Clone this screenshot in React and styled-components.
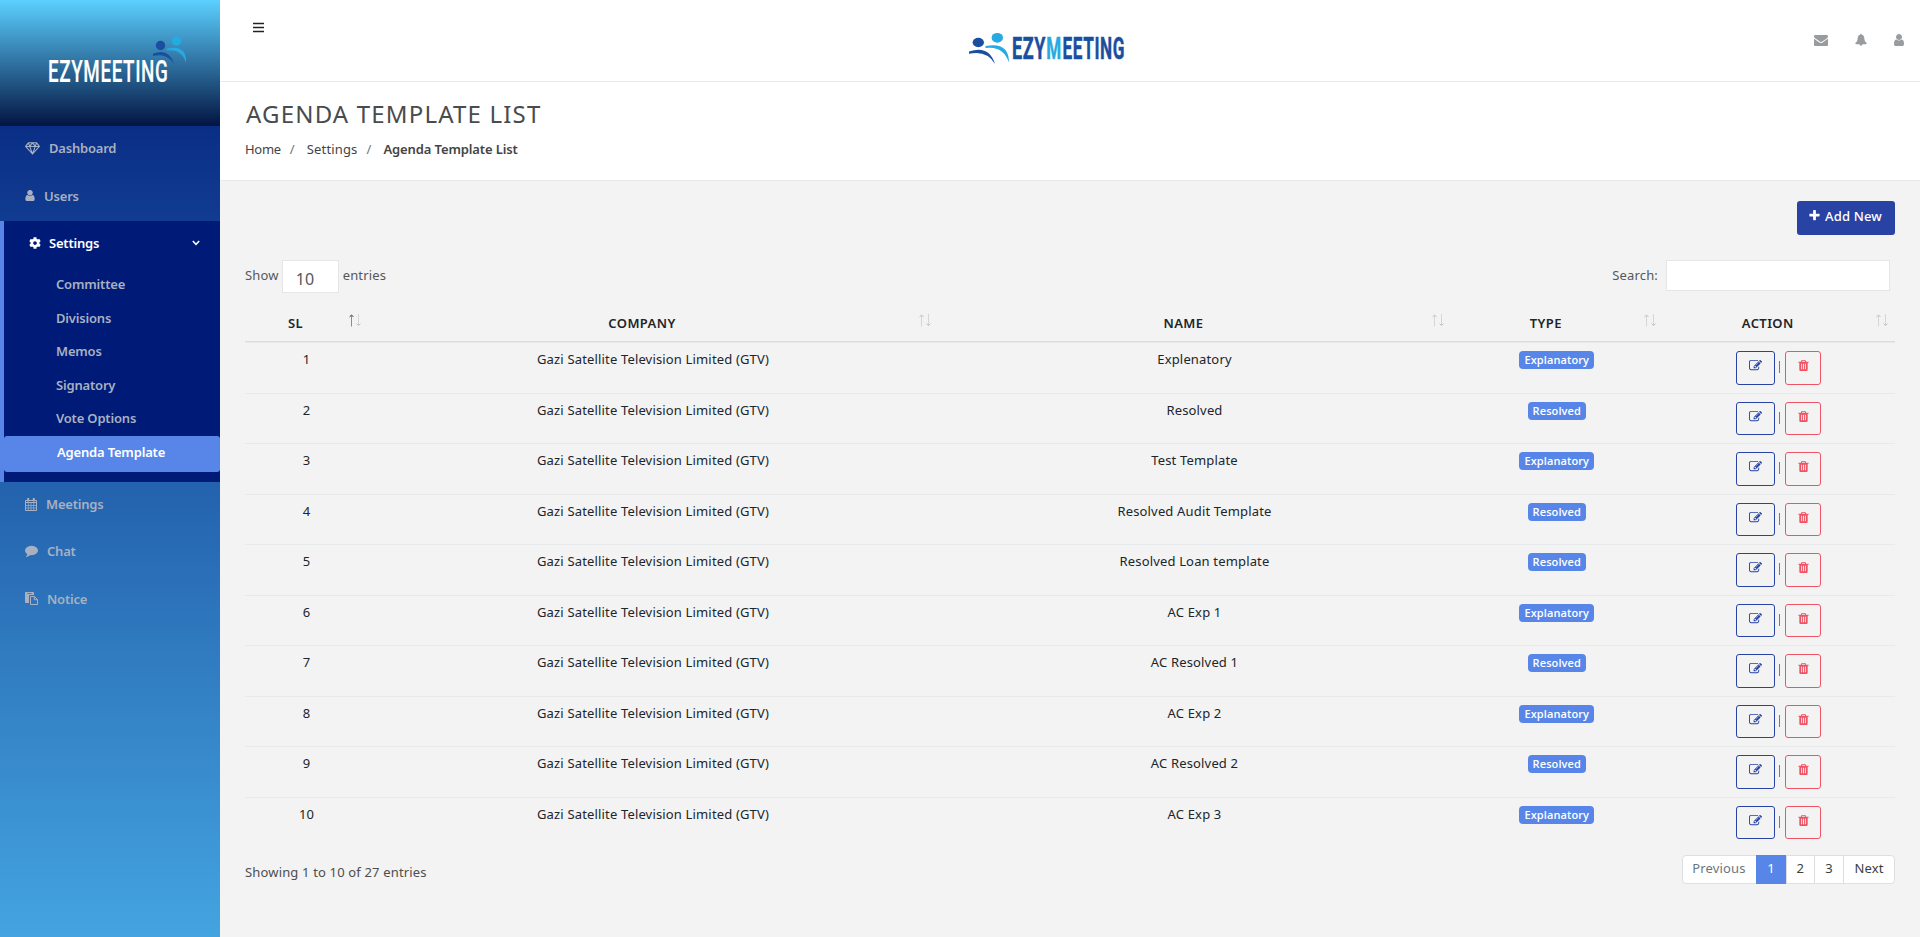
import React from "react";
import styled, { createGlobalStyle, css } from "styled-components";
import { FaCog } from "react-icons/fa";

const Global = createGlobalStyle`
  * { box-sizing: border-box; }
  html, body { margin: 0; }
  body {
    font-family: "Noto Sans", "Open Sans", sans-serif;
    font-size: 13px;
    line-height: 20px;
    letter-spacing: 0.16px;
    color: #676a6c;
    background: #f3f3f4;
  }
`;

const Page = styled.div`
  display: flex;
  height: 937px;
  overflow: hidden;
`;
const Sidebar = styled.nav`
  width: 220px;
  flex: none;
  display: flex;
  flex-direction: column;
  background: linear-gradient(#022c85 0, #0a2e86 126px, #44a4e0 937px);
`;
const Brand = styled.div`
  height: 126px;
  background: linear-gradient(#5bd0ff, #031442);
`;
const NavItem = styled.a`
  display: flex;
  align-items: center;
  height: ${(p) => p.$h || 47}px;
  padding-left: 25px;
  color: ${(p) => (p.$active ? "#fff" : "#a7b1c2")};
  font-weight: 600;
  letter-spacing: -0.2px;
  svg { flex: none; margin-right: ${(p) => p.$gap || 10}px; }
`;
const Group = styled.div`
  height: 261px;
  border-left: 4px solid #5786e8;
  background: #001a78;
`;
const GroupTitle = styled(NavItem)`
  margin-bottom: 3px;
`;
const Chevron = styled.svg`
  && { margin: 0 20px 0 auto; }
`;
const SubItem = styled.a`
  display: block;
  height: 33.6px;
  line-height: 33px;
  padding-left: 52px;
  font-weight: 600;
  letter-spacing: -0.18px;
  color: #a7b1c2;
  ${(p) => p.$active && css`
    height: 36px;
    line-height: 33px;
    padding-left: 53px;
    border-radius: 3px;
    color: #fff;
    background: #5786e8;
  `}
`;

const Main = styled.main`
  flex: 1;
  display: flex;
  flex-direction: column;
`;
const TopBar = styled.header`
  display: grid;
  grid-template-columns: 1fr 208px 1fr;
  height: 82px;
  background: #fff;
  border-bottom: 1px solid #e7eaec;
`;
const MenuIcon = styled.svg`
  margin: 22px 0 0 33px;
`;
const Logo = styled.svg`
  display: block;
  overflow: visible;
`;
const Tools = styled.div`
  display: flex;
  justify-content: flex-end;
  gap: 26px;
  padding: 33px 16px 0 0;
  color: #999c9e;
`;
const Heading = styled.section`
  height: 99px;
  padding: 19px 0 0 25px;
  background: #fff;
  border-bottom: 1px solid #e7eaec;
`;
const Title = styled.h1`
  margin: 0 0 12px 1px;
  font-size: 24px;
  line-height: 26px;
  font-weight: 400;
  letter-spacing: 1.18px;
  color: #4a4b4d;
`;
const Crumbs = styled.div`
  display: flex;
  line-height: 20px;
  color: #444;
`;
const Crumb = styled.span`
  letter-spacing: ${(p) => p.$ls}px;
  font-weight: ${(p) => (p.$current ? 600 : 400)};
`;
const Slash = styled.span`
  width: 26px;
  padding-left: 9px;
  color: #6c757d;
`;
const Content = styled.section`
  flex: 1;
  padding: 20px 25px 0;
`;
const Right = styled.div`
  display: flex;
  justify-content: flex-end;
`;
const AddButton = styled.button`
  display: flex;
  align-items: center;
  gap: 4px;
  width: 98px;
  height: 34px;
  padding: 0 0 5px 11px;
  border: 0;
  border-radius: 3px;
  background: #2843a3;
  color: #fff;
  font: 500 13px "Noto Sans", sans-serif;
  letter-spacing: 0.16px;
`;
const Filters = styled.div`
  display: flex;
  justify-content: space-between;
  margin-top: 25px;
  height: 44px;
  color: #55585a;
`;
const Field = styled.label`
  display: flex;
  line-height: 31px;
`;
const Select = styled.span`
  width: 57px;
  height: 33px;
  margin: 0 4px 0 3px;
  padding-left: 13px;
  border: 1px solid #e5e6e7;
  background: #fff;
  font-size: 16px;
  line-height: 36px;
`;
const Search = styled.input`
  width: 224px;
  height: 31px;
  margin: 0 5px 0 8px;
  border: 1px solid #e5e6e7;
  background: #fff;
`;
const Table = styled.div`
  color: #212529;
`;
const Row = styled.div`
  display: grid;
  grid-template-columns: 123px 570px 513px 211.5px 232.5px;
  height: 50.5px;
  text-align: center;
  border-top: 1px solid #e7eaec;
`;
const HeadRow = styled(Row)`
  height: 38px;
  border-top: 0;
  border-bottom: 1px solid #d9dde1;
`;
const HeadCell = styled.div`
  display: flex;
  padding: 8px 7px 0 8px;
  font-weight: 600;
  line-height: 22px;
  letter-spacing: 0.4px;
  svg { margin-top: 2px; }
`;
const HeadLabel = styled.span`
  flex: 1;
  padding-right: 11px;
`;
const Cell = styled.div`
  padding-top: 7px;
  line-height: 19px;
`;
const BadgeCell = styled.div`
  display: flex;
  justify-content: center;
  align-items: flex-start;
  padding-top: 8px;
`;
const Badge = styled.span`
  height: 18px;
  padding: 0 5px;
  border-radius: 4px;
  background: #5786e8;
  color: #fff;
  font: 600 11px/18px "Open Sans", sans-serif;
  letter-spacing: 0.1px;
`;
const Actions = styled.div`
  display: flex;
  justify-content: center;
  padding-top: 8px;
`;
const IconButton = styled.button`
  display: flex;
  justify-content: center;
  width: ${(p) => p.$w}px;
  height: 33.5px;
  padding: 7px 0 0;
  border: 1px solid ${(p) => p.$c};
  border-radius: 3px;
  background: transparent;
  color: ${(p) => p.$c};
`;
const Bar = styled.span`
  width: 1px;
  height: 12px;
  margin: 10px 5px 0 4px;
  background: #777a7d;
`;
const Footer = styled.div`
  display: flex;
  justify-content: space-between;
  align-items: flex-start;
  padding-top: 8px;
  color: #4c4e50;
`;
const Info = styled.div`
  padding-top: 7px;
`;
const Pager = styled.div`
  display: flex;
  height: 29px;
  border: 1px solid #dddfe2;
  border-radius: 4px;
  background: #fff;
`;
const PageLink = styled.a`
  width: ${(p) => p.$w}px;
  text-align: center;
  line-height: 25px;
  border-left: ${(p) => (p.$first ? 0 : 1)}px solid #ddd;
  color: ${(p) => p.$c || "#3c3e40"};
  ${(p) => p.$active && css`
    margin: -1px 0;
    padding-top: 1px;
    background: #5786e8;
    border-color: #5786e8;
    color: #fff;
  `}
`;

const glyphs = {
  user: "M1536 1399q0 109-62.5 187t-150.5 78h-854q-88 0-150.5-78t-62.5-187q0-85 8.5-160.5t31.5-152 58.5-131 94-89 134.5-34.5q131 128 313 128t313-128q76 0 134.5 34.5t94 89 58.5 131 31.5 152 8.5 160.5zm-256-887q0 159-112.5 271.5t-271.5 112.5-271.5-112.5-112.5-271.5 112.5-271.5 271.5-112.5 271.5 112.5 112.5 271.5z",
  envelope: "M1792 710v794q0 66-47 113t-113 47h-1472q-66 0-113-47t-47-113v-794q44 49 101 87 362 246 497 345 57 42 92.5 65.5t94.5 48 110 24.5h2q51 0 110-24.5t94.5-48 92.5-65.5q170-123 498-345 57-39 100-87zm0-294q0 79-49 151t-122 123q-376 261-468 325-10 7-42.5 31t-54 38.5-52 32.5-57.5 27-50 9h-2q-23 0-50-9t-57.5-27-52-32.5-54-38.5-42.5-31q-91-64-262-182.5t-205-142.5q-62-42-117-115.5t-55-136.5q0-78 41.5-130t118.5-52h1472q65 0 112.5 47t47.5 113z",
  plus: "M1600 736v192q0 40-28 68t-68 28h-416v416q0 40-28 68t-68 28h-192q-40 0-68-28t-28-68v-416h-416q-40 0-68-28t-28-68v-192q0-40 28-68t68-28h416v-416q0-40 28-68t68-28h192q40 0 68 28t28 68v416h416q40 0 68 28t28 68z",
  comment: "M1792 896q0 174-120 321.5t-326 233-450 85.5q-70 0-145-8-198 175-460 242-49 14-114 22-17 2-30.5-9t-17.5-29v-1q-3-4-.5-12t2-10 4.5-9.5l6-9 7-8.5 8-9q7-8 31-34.5t34.5-38 31-39.5 32.5-51 27-59 26-76q-157-89-247.5-220t-90.5-281q0-130 71-248.5t191-204.5 286-136.5 348-50.5q244 0 450 85.5t326 233 120 321.5z",
  edit: "M888 1184l116-116-152-152-116 116v56h96v96h56zm440-720q-16-16-33 1l-350 350q-17 17-1 33t33-1l350-350q17-17 1-33zm80 594v190q0 119-84.5 203.5t-203.5 84.5h-832q-119 0-203.5-84.5t-84.5-203.5v-832q0-119 84.5-203.5t203.5-84.5h832q63 0 117 25 15 7 18 23 3 17-9 29l-49 49q-14 14-32 8-23-6-45-6h-832q-66 0-113 47t-47 113v832q0 66 47 113t113 47h832q66 0 113-47t47-113v-126q0-13 9-22l64-64q15-15 35-7t20 29zm-96-738l288 288-672 672h-288v-288zm444 132l-92 92-288-288 92-92q28-28 68-28t68 28l152 152q28 28 28 68t-28 68z",
  trash: "M704 1376v-704q0-14-9-23t-23-9h-64q-14 0-23 9t-9 23v704q0 14 9 23t23 9h64q14 0 23-9t9-23zm256 0v-704q0-14-9-23t-23-9h-64q-14 0-23 9t-9 23v704q0 14 9 23t23 9h64q14 0 23-9t9-23zm256 0v-704q0-14-9-23t-23-9h-64q-14 0-23 9t-9 23v704q0 14 9 23t23 9h64q14 0 23-9t9-23zm-544-992h448l-48-117q-7-9-17-11h-317q-10 2-17 11zm928 32v64q0 14-9 23t-23 9h-96v948q0 83-47 143.5t-113 60.5h-832q-66 0-113-58.5t-47-141.5v-952h-96q-14 0-23-9t-9-23v-64q0-14 9-23t23-9h309l70-167q15-37 54-63t79-26h320q40 0 79 26t54 63l70 167h309q14 0 23 9t9 23z",
  bell: "M896 64q70 0 70 80v50q320 60 350 420 15 330 110 470 60 90 186 170v90q0 80-90 80h-1252q-90 0-90-80v-90q126-80 186-170 95-140 110-470 30-360 350-420v-50q0-80 70-80zM700 1450h392q-20 190-196 190t-196-190z",
};
const Glyph = ({ name, box = "0 0 1792 1792", w = 13, h = 13 }) => (
  <svg width={w} height={h} viewBox={box} fill="currentColor"><path d={glyphs[name]} /></svg>
);
const Diamond = () => (
  <svg width="15" height="13" viewBox="0 0 15 13" fill="none" stroke="currentColor" strokeWidth="1.1" strokeLinejoin="round">
    <path d="M3.4.8h8.2l2.8 3.6L7.5 12 .6 4.4zM.6 4.5h13.8M3.4.8l1.3 3.6L7.5 12l2.8-7.6L11.6.8M4.7 4.4L7.5.8l2.8 3.6" />
  </svg>
);
const Calendar = () => (
  <svg width="12" height="13" viewBox="0 0 12 13" fill="none" stroke="currentColor">
    <path d="M.5 2.5h11v10H.5zM.5 4.5h11" />
    <path d="M3.3 5v7.5M6 5v7.5M8.7 5v7.5M.5 7.5h11M.5 10h11" strokeWidth=".7" />
    <path d="M3.2 0v3.5M8.8 0v3.5" strokeWidth="2" />
  </svg>
);
const Paste = () => (
  <svg width="13" height="13" viewBox="0 0 13 13" fill="none" stroke="currentColor">
    <path d="M0 .8Q0 0 .8 0h7.400Q9 0 9 .8V3H5.200Q4 3 4 4.200V11H.8Q0 11 0 10.200z" fill="currentColor" stroke="none" />
    <path d="M2.300 1.500h4.400" stroke="#2c72b8" strokeWidth=".8" />
    <path d="M5.500 4.500h4l3 3v5h-7zM9.300 4.500v3.200h3.200" />
  </svg>
);
const Sort = ({ up }) => (
  <svg width="12" height="13" viewBox="0 0 12 13" fill="none" stroke="#b9bbbd">
    <path d="M2.5 1.5v11" stroke={up ? "#8b8d8f" : "#d5d6d7"} />
    <path d="M.6 2.9L2.5 1l1.9 1.9" stroke={up ? "#333" : "#b9bbbd"} />
    <path d="M9.5 0v11" stroke="#d5d6d7" />
    <path d="M7.6 9.6l1.9 1.9 1.9-1.9" />
  </svg>
);

const navy = "#1a4fa0";
const sky = "#27aae1";
const Word = styled.text`
  font-family: Roboto, sans-serif;
  font-size: 30.5px;
  font-weight: ${(p) => p.$weight || 700};
  letter-spacing: 1px;
  fill: ${(p) => p.$c};
  stroke: ${(p) => p.$c};
  stroke-width: ${(p) => p.$stroke || 0.5}px;
`;
const SideLogo = () => (
  <Logo width="220" height="126">
    <circle cx="160.5" cy="45.5" r="4.7" fill={navy} />
    <circle cx="176.5" cy="41" r="4.7" fill={sky} />
    <path d="M153 53.5Q169 47.5 174 64Q167 52.5 153 56z" fill={navy} />
    <path d="M167 48.5Q187 44 186 63Q182 49 167 50.5z" fill={sky} />
    <Word x="48" y="82" $c="#fff" $weight={500} $stroke={0.2} textLength="120.5" lengthAdjust="spacingAndGlyphs">EZYMEETING</Word>
  </Logo>
);
const TopLogo = () => (
  <Logo width="160" height="81" viewBox="966 0 160 81">
    <ellipse cx="978.3" cy="42.5" rx="5.7" ry="4.7" fill={navy} />
    <ellipse cx="997.3" cy="37.8" rx="5.7" ry="4.9" fill={sky} />
    <path d="M969 51.5Q989 44.5 995 64Q987 50 969 53.8z" fill={navy} />
    <path d="M985.5 46Q1009 41.5 1009 62.5Q1003 45.5 985.5 48z" fill={sky} />
    <Word x="1012" y="58.8" $c={navy} textLength="34" lengthAdjust="spacingAndGlyphs">EZY</Word>
    <Word x="1046.3" y="58.8" $c={sky} textLength="15.5" lengthAdjust="spacingAndGlyphs">M</Word>
    <Word x="1062.6" y="58.8" $c={navy} textLength="62.3" lengthAdjust="spacingAndGlyphs">EETING</Word>
  </Logo>
);

const rows = [
  ["Explenatory", "Explanatory"],
  ["Resolved", "Resolved"],
  ["Test Template", "Explanatory"],
  ["Resolved Audit Template", "Resolved"],
  ["Resolved Loan template", "Resolved"],
  ["AC Exp 1", "Explanatory"],
  ["AC Resolved 1", "Resolved"],
  ["AC Exp 2", "Explanatory"],
  ["AC Resolved 2", "Resolved"],
  ["AC Exp 3", "Explanatory"],
];

export default function App() {
  return (
    <Page>
      <Global />
      <Sidebar>
        <Brand><SideLogo /></Brand>
        <NavItem $h={44} $gap={9}><Diamond />Dashboard</NavItem>
        <NavItem $h={51} $gap={9}><Glyph name="user" box="256 0 1280 1792" w={10} />Users</NavItem>
        <Group>
          <GroupTitle as="div" $active $h={44} $gap={8}>
            <FaCog size={12} />Settings
            <Chevron width="8" height="6" viewBox="0 0 8 6" fill="none" stroke="currentColor" strokeWidth="1.5"><path d="M.8 1L4 4.3 7.2 1" /></Chevron>
          </GroupTitle>
          <SubItem>Committee</SubItem>
          <SubItem>Divisions</SubItem>
          <SubItem>Memos</SubItem>
          <SubItem>Signatory</SubItem>
          <SubItem>Vote Options</SubItem>
          <SubItem $active>Agenda Template</SubItem>
        </Group>
        <NavItem $h={44} $gap={9}><Calendar />Meetings</NavItem>
        <NavItem $h={49} $gap={9}><Glyph name="comment" />Chat</NavItem>
        <NavItem $gap={9}><Paste />Notice</NavItem>
      </Sidebar>
      <Main>
        <TopBar>
          <MenuIcon width="11" height="11" viewBox="0 0 11 11" stroke="#222" strokeWidth="1.6"><path d="M0 1.5h11M0 5.5h11M0 9.5h11" /></MenuIcon>
          <TopLogo />
          <Tools>
            <Glyph name="envelope" w={14} h={14} />
            <Glyph name="bell" w={14} h={14} />
            <Glyph name="user" box="256 0 1280 1792" w={10} h={14} />
          </Tools>
        </TopBar>
        <Heading>
          <Title>AGENDA TEMPLATE LIST</Title>
          <Crumbs>
            <Crumb $ls={-0.3}>Home</Crumb><Slash>/</Slash>
            <Crumb $ls={0.15}>Settings</Crumb><Slash>/</Slash>
            <Crumb $current $ls={-0.12}>Agenda Template List</Crumb>
          </Crumbs>
        </Heading>
        <Content>
          <Right><AddButton><Glyph name="plus" />Add New</AddButton></Right>
          <Filters>
            <Field>Show<Select>10</Select>entries</Field>
            <Field>Search:<Search /></Field>
          </Filters>
          <Table>
            <HeadRow>
              {["SL", "COMPANY", "NAME", "TYPE", "ACTION"].map((t, i) => (
                <HeadCell key={t}><HeadLabel>{t}</HeadLabel><Sort up={i === 0} /></HeadCell>
              ))}
            </HeadRow>
            {rows.map(([name, type], i) => (
              <Row key={name}>
                <Cell>{i + 1}</Cell>
                <Cell>Gazi Satellite Television Limited (GTV)</Cell>
                <Cell>{name}</Cell>
                <BadgeCell><Badge>{type}</Badge></BadgeCell>
                <Actions>
                  <IconButton $w={39} $c="#2843a3"><Glyph name="edit" /></IconButton>
                  <Bar />
                  <IconButton $w={36} $c="#ed5565"><Glyph name="trash" /></IconButton>
                </Actions>
              </Row>
            ))}
          </Table>
          <Footer>
            <Info>Showing 1 to 10 of 27 entries</Info>
            <Pager>
              <PageLink $first $w={73} $c="#6c757d">Previous</PageLink>
              <PageLink $active $w={30}>1</PageLink>
              <PageLink $w={28.5}>2</PageLink>
              <PageLink $w={29}>3</PageLink>
              <PageLink $w={51}>Next</PageLink>
            </Pager>
          </Footer>
        </Content>
      </Main>
    </Page>
  );
}
